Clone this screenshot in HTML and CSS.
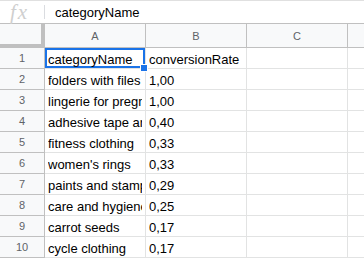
FILE: index.html
```html
<!DOCTYPE html>
<html>

<head>
    <title>Sheet</title>
    <meta charset='utf-8'>
    <link rel="stylesheet" href="styles.css">
</head>

<body>
    <div class='formulaBar'>
        <span class='fx'>fx</span>
        <span class='fxSep'></span>
        <span class='fxText'>categoryName</span>
    </div>

    <div class='grid'>
        <div class='corner'></div>
        <div class='colHead'>A</div>
        <div class='colHead'>B</div>
        <div class='colHead'>C</div>
        <div class='colHead last'></div>

        <div class='rowHead'>1</div>
        <div class='cell selected'><span class='txt'>categoryName</span><span class='handle'></span></div>
        <div class='cell'><span class='txt'>conversionRate</span></div>
        <div class='cell'></div>
        <div class='cell last'></div>

        <div class='rowHead'>2</div>
        <div class='cell'><span class='txt'>folders with files</span></div>
        <div class='cell'><span class='txt'>1,00</span></div>
        <div class='cell'></div>
        <div class='cell last'></div>

        <div class='rowHead'>3</div>
        <div class='cell'><span class='txt'>lingerie for pregnant women</span></div>
        <div class='cell'><span class='txt'>1,00</span></div>
        <div class='cell'></div>
        <div class='cell last'></div>

        <div class='rowHead'>4</div>
        <div class='cell'><span class='txt'>adhesive tape and films</span></div>
        <div class='cell'><span class='txt'>0,40</span></div>
        <div class='cell'></div>
        <div class='cell last'></div>

        <div class='rowHead'>5</div>
        <div class='cell'><span class='txt'>fitness clothing</span></div>
        <div class='cell'><span class='txt'>0,33</span></div>
        <div class='cell'></div>
        <div class='cell last'></div>

        <div class='rowHead'>6</div>
        <div class='cell'><span class='txt'>women's rings</span></div>
        <div class='cell'><span class='txt'>0,33</span></div>
        <div class='cell'></div>
        <div class='cell last'></div>

        <div class='rowHead'>7</div>
        <div class='cell'><span class='txt'>paints and stamp pads</span></div>
        <div class='cell'><span class='txt'>0,29</span></div>
        <div class='cell'></div>
        <div class='cell last'></div>

        <div class='rowHead'>8</div>
        <div class='cell'><span class='txt'>care and hygiene products</span></div>
        <div class='cell'><span class='txt'>0,25</span></div>
        <div class='cell'></div>
        <div class='cell last'></div>

        <div class='rowHead'>9</div>
        <div class='cell'><span class='txt'>carrot seeds</span></div>
        <div class='cell'><span class='txt'>0,17</span></div>
        <div class='cell'></div>
        <div class='cell last'></div>

        <div class='rowHead'>10</div>
        <div class='cell'><span class='txt'>cycle clothing</span></div>
        <div class='cell'><span class='txt'>0,17</span></div>
        <div class='cell'></div>
        <div class='cell last'></div>
    </div>
</body>

</html>
```

FILE: styles.css
```css
body {
    margin: 0;
    padding: 0;
    background: #fff;
    font-family: "Liberation Sans", Arial, sans-serif;
    overflow: hidden
}

.formulaBar {
    height: 22px;
    border-top: 1px solid #e0e0e0;
    border-bottom: 1px solid #c0c0c0;
    display: flex;
    align-items: center
}

.fx {
    width: 44px;
    box-sizing: border-box;
    padding-left: 10px;
    font-family: "Liberation Serif", serif;
    font-style: italic;
    font-size: 21px;
    color: #cfcfcf;
    letter-spacing: 2px
}

.fxSep {
    width: 1px;
    height: 14px;
    background: #dadce0
}

.fxText {
    padding-left: 10px;
    font-size: 13px;
    color: #000
}

.grid {
    display: grid;
    grid-template-columns: 45px 101px 101px 101px 1fr;
    grid-template-rows: 24px repeat(10, 21px)
}

.corner {
    background: #f8f9fa;
    border-right: 4px solid #c0c0c0;
    border-bottom: 4px solid #c0c0c0
}

.colHead,
.rowHead {
    background: #f8f9fa;
    border-right: 1px solid #c0c0c0;
    border-bottom: 1px solid #c0c0c0;
    color: #5f6368;
    font-size: 11px;
    display: flex;
    align-items: center;
    justify-content: center
}

.cell {
    position: relative;
    border-right: 1px solid #e2e3e3;
    border-bottom: 1px solid #e2e3e3;
    font-size: 13px;
    color: #000;
    padding: 1px 3px 0;
    line-height: 19px;
    white-space: nowrap;
    min-width: 0
}

.txt {
    display: block;
    overflow: hidden;
    padding-top: 1px
}

.last {
    border-right: 0
}

.selected {
    box-shadow: inset 0 0 0 2px #1a73e8;
    z-index: 1
}

.handle {
    position: absolute;
    right: -3px;
    bottom: -4px;
    width: 6px;
    height: 6px;
    background: #1a73e8;
    border: 1px solid #fff
}
```
